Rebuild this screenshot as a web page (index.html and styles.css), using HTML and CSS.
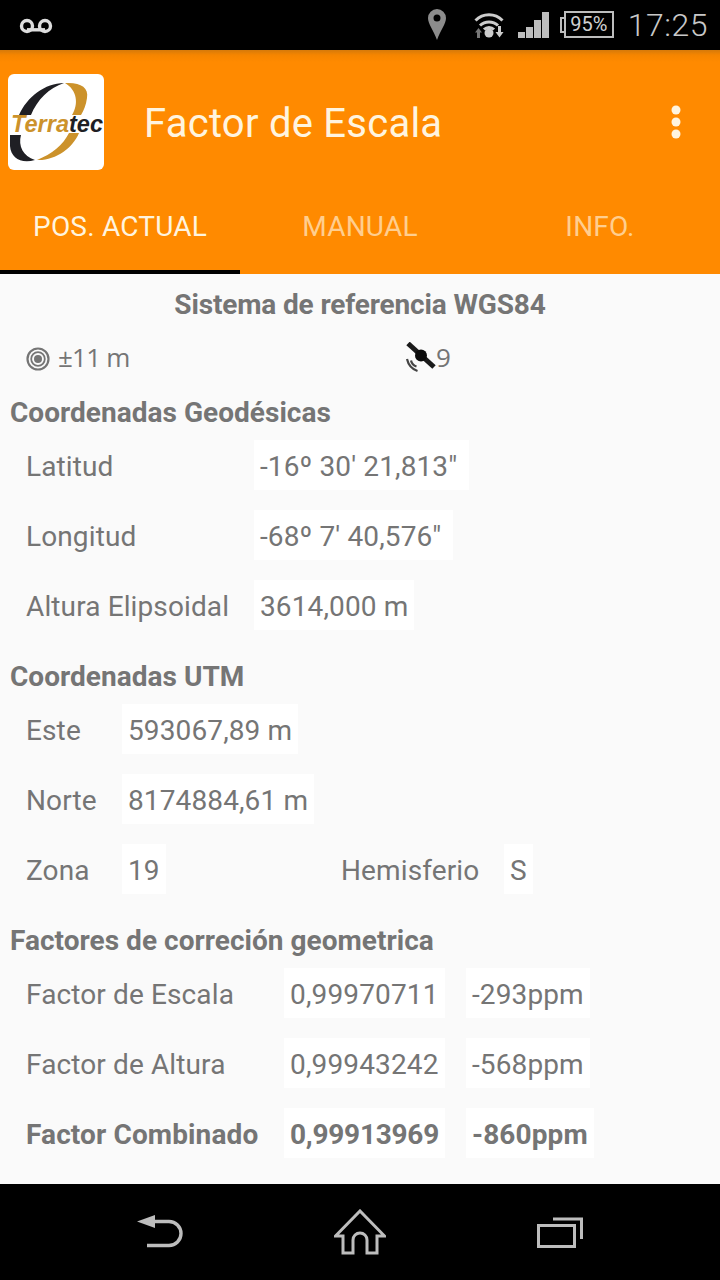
FILE: index.html
```html
<!DOCTYPE html>
<html lang="es">
<head>
<meta charset="utf-8">
<title>Factor de Escala</title>
<link rel="stylesheet" href="styles.css">
</head>
<body>
<div class="phone">
  <div class="statusbar">
    <svg class="ic-voicemail" width="34" height="16" viewBox="0 0 34 16"><circle cx="8" cy="8" r="5.500" fill="none" stroke="#ddd" stroke-width="3.400"/><circle cx="26" cy="8" r="5.500" fill="none" stroke="#ddd" stroke-width="3.400"/><path d="M8 11.800H26" stroke="#ddd" stroke-width="3.400"/></svg>
    <svg class="ic-pin" width="18" height="31" viewBox="0 0 18 31"><path fill-rule="evenodd" fill="#8c8c8c" d="M9 0a9 9 0 0 1 9 9c0 6-5.500 12-9 22C5.500 21 0 15 0 9a9 9 0 0 1 9-9zM9 5.500a3.500 3.500 0 1 0 0 7 3.500 3.500 0 0 0 0-7z"/></svg>
    <svg class="ic-wifi" width="30" height="27" viewBox="0 0 30 27"><g fill="none" stroke="#ccc" stroke-width="3"><path d="M1.500 9.500a19 19 0 0 1 27 0"/><path d="M6 14.500a13 13 0 0 1 18 0"/><path d="M10 18.500a7 7 0 0 1 10 0"/></g><circle cx="15" cy="22" r="4.500" fill="#ccc"/><path d="M4.500 17l3.500 4.500H6V27H3v-5.500H1z" fill="#777"/><path d="M24 15h3v6h2.500l-4 5.500-4-5.500H24z" fill="#ccc"/></svg>
    <svg class="ic-signal" width="31" height="26" viewBox="0 0 31 26"><g fill="#bdbdbd"><rect x="0" y="20" width="7" height="6"/><rect x="8" y="15" width="7" height="11"/><rect x="16" y="8" width="7" height="18"/><rect x="24" y="0" width="7" height="26"/></g></svg>
    <div class="battery"><span class="battery-nub"></span><span class="battery-body">95%</span></div>
    <span class="clock">17:25</span>
  </div>

  <header class="appbar">
    <div class="logo">
      <svg width="96" height="96" viewBox="0 0 96 96">
        <path fill="#1f1f24" d="M11 41C19 23 37 9 56 9 41 14 29 26 23 41z"/>
        <path fill="#cc922b" d="M57 9C72 8 81 13 79 24 78 31 76 36 73 41H64C71 30 69 16 57 9z"/>
        <path fill="#1f1f24" d="M2 61H13C10 72 15 82 27 86 13 90 3 84 2 72z"/>
        <path fill="#cc922b" d="M61 59H71C65 74 47 87 29 86 44 80 55 71 61 59z"/>
        <text class="logo-text" x="3" y="58" textLength="92" lengthAdjust="spacingAndGlyphs"><tspan class="logo-gold">Terra</tspan><tspan class="logo-dark">tec</tspan></text>
      </svg>
    </div>
    <h1 class="title">Factor de Escala</h1>
    <svg class="ic-more" width="10" height="34" viewBox="0 0 10 34"><g fill="#fff4df"><circle cx="5" cy="5" r="4.500"/><circle cx="5" cy="17" r="4.500"/><circle cx="5" cy="29" r="4.500"/></g></svg>
  </header>

  <nav class="tabs">
    <div class="tab tab-active">POS. ACTUAL</div>
    <div class="tab">MANUAL</div>
    <div class="tab">INFO.</div>
  </nav>

  <main class="content">
    <div class="system">Sistema de referencia WGS84</div>
    <div class="gps">
      <div class="gps-accuracy">
        <svg width="24" height="24" viewBox="0 0 24 24"><circle cx="12" cy="12" r="10.500" fill="none" stroke="#757575" stroke-width="2.200"/><circle cx="12" cy="12" r="6.800" fill="none" stroke="#757575" stroke-width="1.800"/><circle cx="12" cy="12" r="4" fill="#757575"/></svg>
        <span class="gps-text gps-text-tight">±11 m</span>
      </div>
      <div class="gps-sats">
        <svg class="ic-sat" width="32" height="33" viewBox="0 0 32 33"><path stroke="#1a1a1a" stroke-width="5" d="M4 1.500L30 25" fill="none"/><circle cx="17" cy="13.500" r="6" fill="#0c0c0c"/><g fill="none" stroke="#444" stroke-width="2.200"><path d="M7 18.500Q8 23 12.500 24.500"/><path d="M3 17Q5 26 13.500 29"/></g></svg>
        <span class="gps-text">9</span>
      </div>
    </div>

    <section class="group">
      <h2 class="heading">Coordenadas Geodésicas</h2>
      <div class="row geo"><span class="label">Latitud</span><span class="value value-dms">-16º 30' 21,813"</span></div>
      <div class="row geo"><span class="label">Longitud</span><span class="value value-dms">-68º 7' 40,576"</span></div>
      <div class="row geo"><span class="label">Altura Elipsoidal</span><span class="value">3614,000 m</span></div>
    </section>

    <section class="group">
      <h2 class="heading">Coordenadas UTM</h2>
      <div class="row utm"><span class="label">Este</span><span class="value">593067,89 m</span></div>
      <div class="row utm"><span class="label">Norte</span><span class="value">8174884,61 m</span></div>
      <div class="row utm"><span class="label">Zona</span><span class="value">19</span><span class="label">Hemisferio</span><span class="value">S</span></div>
    </section>

    <section class="group">
      <h2 class="heading">Factores de correción geometrica</h2>
      <div class="row factor"><span class="label">Factor de Escala</span><span class="value value-num">0,99970711</span><span class="value">-293ppm</span></div>
      <div class="row factor"><span class="label">Factor de Altura</span><span class="value value-num">0,99943242</span><span class="value">-568ppm</span></div>
      <div class="row factor strong"><span class="label">Factor Combinado</span><span class="value value-num">0,99913969</span><span class="value">-860ppm</span></div>
    </section>
  </main>

  <footer class="navbar">
    <div class="nav-cell">
      <svg width="46" height="34" viewBox="0 0 46 34"><path d="M0 6.500L18 0v13z" fill="#bdbdbd"/><path d="M14 6.500H32a12 12 0 0 1 0 24H10" fill="none" stroke="#bdbdbd" stroke-width="3.400"/></svg>
    </div>
    <div class="nav-cell">
      <svg width="52" height="46" viewBox="0 0 52 46"><path d="M1.500 27L26 2l24.500 25H43V44H33V31a7 7 0 0 0-14 0V44H9V27z" fill="none" stroke="#bdbdbd" stroke-width="3"/></svg>
    </div>
    <div class="nav-cell">
      <svg width="46" height="31" viewBox="0 0 46 31"><rect x="1.500" y="8.500" width="36" height="21" fill="none" stroke="#bdbdbd" stroke-width="3"/><path d="M16 2H44.500V22" fill="none" stroke="#bdbdbd" stroke-width="3"/></svg>
    </div>
  </footer>
</div>
</body>
</html>
```

FILE: styles.css
```css
* { box-sizing: border-box; }
html, body { margin: 0; padding: 0; }
body { background: #000; font-family: Roboto, "Liberation Sans", sans-serif; }

.phone {
  width: 720px;
  height: 1280px;
  display: flex;
  flex-direction: column;
  overflow: hidden;
  background: #fafafa;
}

/* Status bar */
.statusbar {
  height: 50px;
  flex: none;
  background: #000;
  display: flex;
  align-items: center;
  padding: 0 12px 0 19px;
}
.ic-voicemail { margin-top: 2px; }
.ic-pin { margin-left: auto; margin-top: -1px; }
.ic-wifi { margin-left: 28px; margin-top: -1px; }
.ic-signal { margin-left: 14px; }
.battery {
  margin-left: 11px;
  display: flex;
  align-items: center;
  margin-top: -1px;
}
.battery-nub {
  width: 4px;
  height: 16px;
  border: 2px solid #bdbdbd;
  border-right: none;
}
.battery-body {
  width: 50px;
  height: 27px;
  border: 2px solid #bdbdbd;
  color: #d0d0d0;
  font-size: 20px;
  line-height: 23px;
  text-align: center;
}
.clock {
  margin-left: 14px;
  color: #c8c8c8;
  font-size: 32px;
  font-weight: 300;
  letter-spacing: 0.5px;
}

/* App bar */
.appbar {
  height: 144px;
  flex: none;
  background: linear-gradient(#d67a0a 0, #f58500 5px, #ff8a00 12px);
  display: flex;
  align-items: center;
  padding: 0 39px 0 8px;
}
.logo {
  width: 96px;
  height: 96px;
  margin-top: -1px;
  background: #fff;
  border-radius: 6px;
  overflow: hidden;
}
.logo svg { display: block; }
.logo-text { font-family: "Liberation Sans", sans-serif; font-size: 24px; font-weight: 700; font-style: italic; }
.logo-gold { fill: #cc922b; }
.logo-dark { fill: #1f1f24; }
.title {
  margin: 2px 0 0 40px;
  color: #fff4df;
  font-size: 40px;
  font-weight: 400;
  letter-spacing: 0.25px;
}
.ic-more { margin-left: auto; }

/* Tabs */
.tabs {
  height: 80px;
  flex: none;
  background: #ff8a00;
  display: flex;
}
.tab {
  flex: 1;
  text-align: center;
  color: #ffce8f;
  font-size: 28px;
  letter-spacing: 0.2px;
  line-height: 66px;
}
.tab-active {
  color: #fff4df;
  border-bottom: 4px solid #000;
}

/* Content */
.content {
  flex: 1;
  color: #757575;
  font-size: 28px;
  letter-spacing: 0.12px;
}
.system {
  height: 60px;
  padding-top: 1px;
  line-height: 60px;
  text-align: center;
  font-weight: 700;
  letter-spacing: -0.15px;
}
.gps {
  height: 50px;
  display: flex;
  align-items: center;
}
.gps-accuracy {
  width: 404px;
  padding-left: 26px;
  display: flex;
  align-items: center;
  gap: 8px;
}
.gps-sats { display: flex; align-items: center; }
.gps-accuracy svg, .gps-sats svg { display: block; }
.ic-sat { margin-top: -1px; }
.gps-text {
  font-family: "Open Sans", sans-serif;
  font-size: 26px;
  line-height: 46px;
  margin-top: -4px;
  letter-spacing: 0;
}
.gps-text-tight { letter-spacing: -0.8px; }

.group { margin-bottom: 18px; }
.heading {
  margin: 0;
  height: 56px;
  padding-top: 1px;
  line-height: 55px;
  padding-left: 10px;
  font-size: 28px;
  font-weight: 700;
  letter-spacing: 0.03px;
}
.row {
  display: grid;
  height: 50px;
  margin-bottom: 20px;
  padding-left: 26px;
  align-items: stretch;
  justify-items: start;
}
.row:last-child { margin-bottom: 0; }
.geo { grid-template-columns: 228px auto; }
.utm { grid-template-columns: 96px 219px 163px auto; }
.factor { grid-template-columns: 258px 182px auto; }
.strong { font-weight: 700; }
.label { padding-top: 4px; line-height: 46px; }
.value {
  padding: 4px 6px 0;
  line-height: 46px;
  background: #fff;
  white-space: nowrap;
}
.value-dms { padding-right: 12px; }
.value-num { letter-spacing: 0.15px; }
.strong .value-num { letter-spacing: -0.25px; }

/* Navigation bar */
.navbar {
  height: 96px;
  flex: none;
  background: #000;
  display: flex;
  padding: 0 60px;
}
.nav-cell {
  width: 200px;
  display: flex;
  align-items: center;
  justify-content: center;
}
```
